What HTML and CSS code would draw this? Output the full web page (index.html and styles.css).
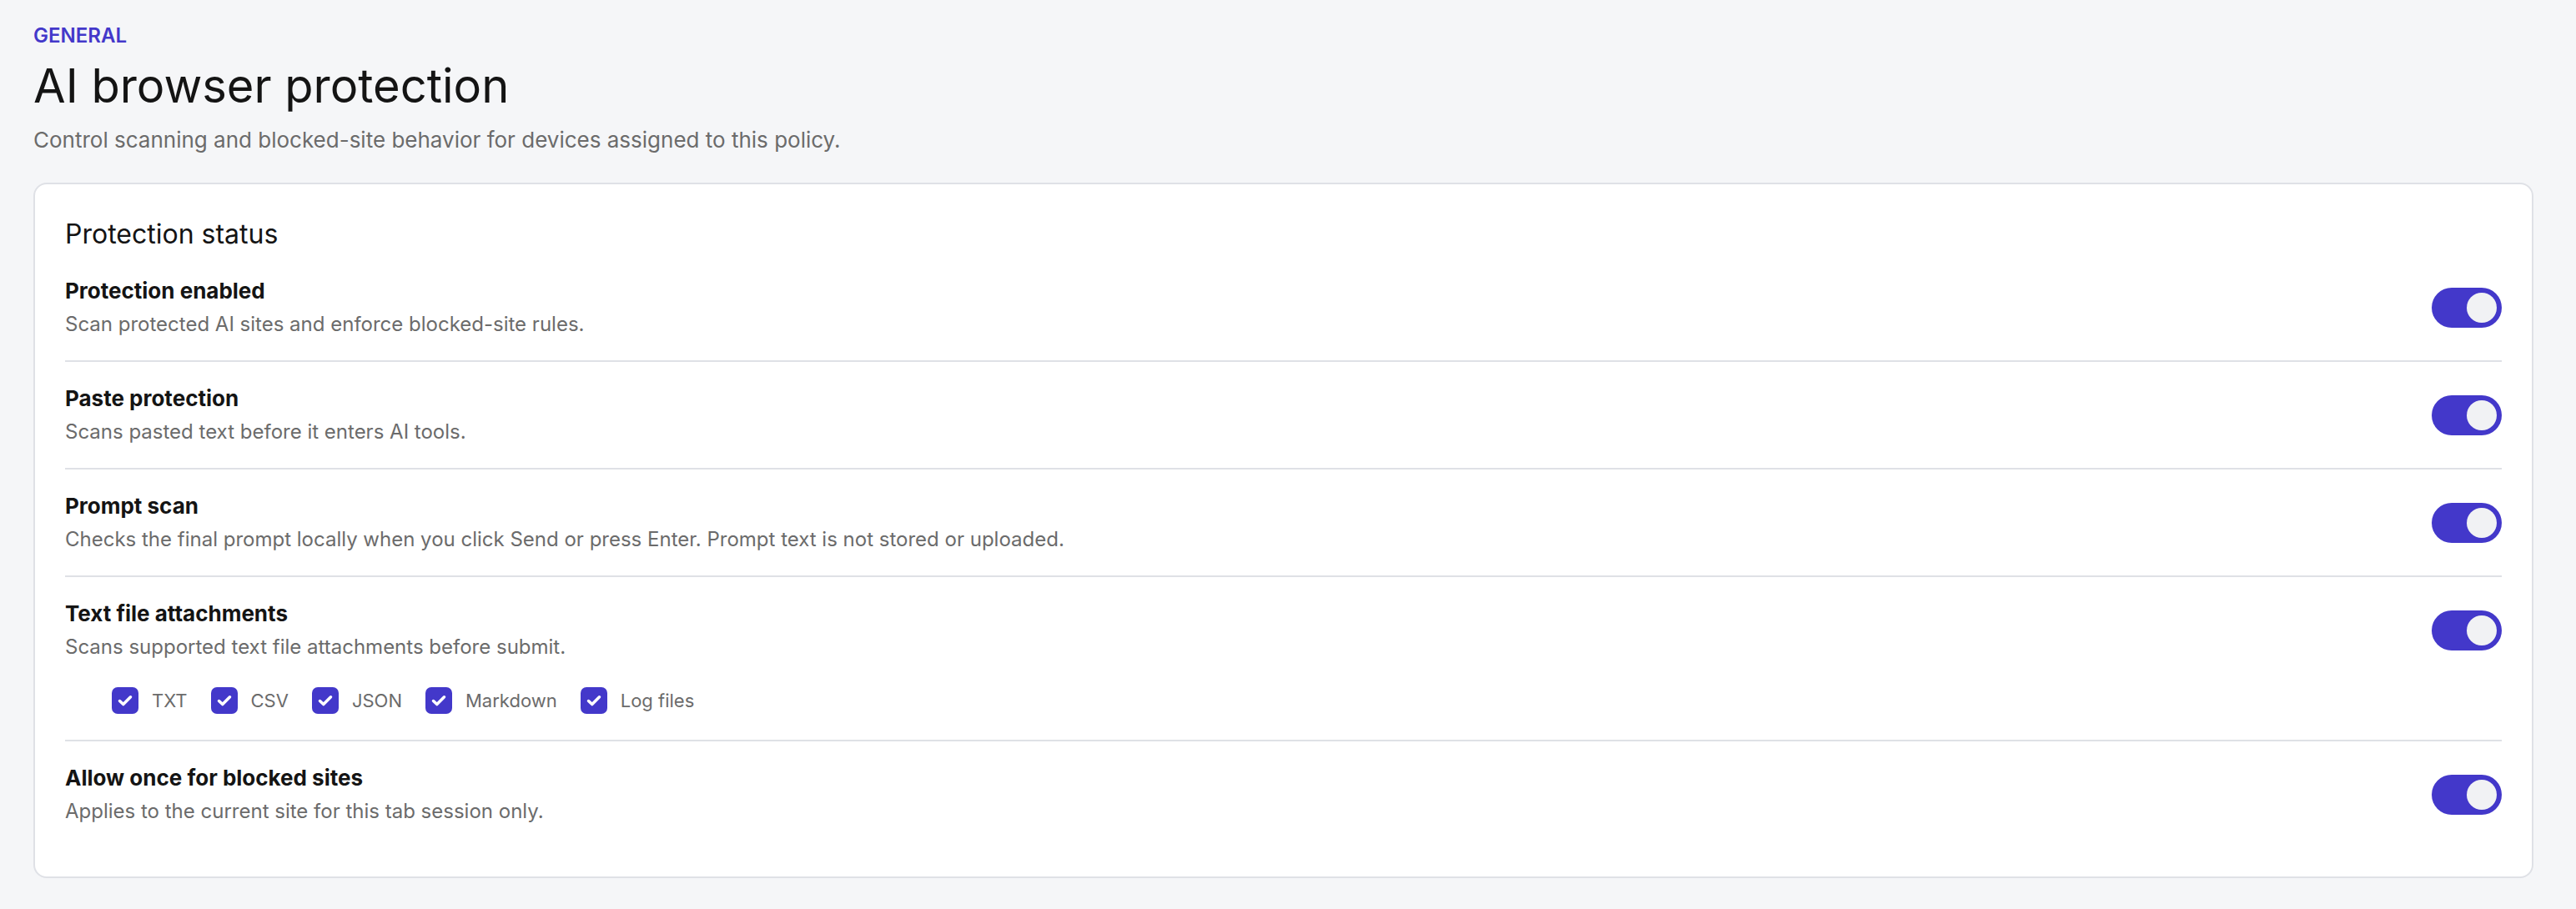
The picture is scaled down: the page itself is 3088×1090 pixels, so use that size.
FILE: index.html
```html
<!DOCTYPE html>
<html lang="en">
<head>
<meta charset="utf-8">
<title>AI browser protection</title>
<link rel="stylesheet" href="styles.css">
</head>
<body>
<main class="page">
  <header class="page-header">
    <div class="eyebrow">GENERAL</div>
    <h1 class="title">AI browser protection</h1>
    <p class="subtitle">Control scanning and blocked-site behavior for devices assigned to this policy.</p>
  </header>

  <section class="card">
    <h2 class="card-title">Protection status</h2>

    <div class="row">
      <div class="row-text">
        <div class="row-title">Protection enabled</div>
        <div class="row-desc">Scan protected AI sites and enforce blocked-site rules.</div>
      </div>
      <span class="toggle"><span class="knob"></span></span>
    </div>

    <div class="row">
      <div class="row-text">
        <div class="row-title">Paste protection</div>
        <div class="row-desc">Scans pasted text before it enters AI tools.</div>
      </div>
      <span class="toggle"><span class="knob"></span></span>
    </div>

    <div class="row">
      <div class="row-text">
        <div class="row-title">Prompt scan</div>
        <div class="row-desc">Checks the final prompt locally when you click Send or press Enter. Prompt text is not stored or uploaded.</div>
      </div>
      <span class="toggle"><span class="knob"></span></span>
    </div>

    <div class="row row-stack">
      <div class="row-main">
        <div class="row-text">
          <div class="row-title">Text file attachments</div>
          <div class="row-desc">Scans supported text file attachments before submit.</div>
        </div>
        <span class="toggle"><span class="knob"></span></span>
      </div>
      <div class="checks">
        <label class="check"><span class="box"><svg viewBox="0 0 32 32"><path d="M9.5 16.5 L13.8 20.6 L22.5 11.8"/></svg></span>TXT</label>
        <label class="check"><span class="box"><svg viewBox="0 0 32 32"><path d="M9.5 16.5 L13.8 20.6 L22.5 11.8"/></svg></span>CSV</label>
        <label class="check"><span class="box"><svg viewBox="0 0 32 32"><path d="M9.5 16.5 L13.8 20.6 L22.5 11.8"/></svg></span>JSON</label>
        <label class="check"><span class="box"><svg viewBox="0 0 32 32"><path d="M9.5 16.5 L13.8 20.6 L22.5 11.8"/></svg></span>Markdown</label>
        <label class="check"><span class="box"><svg viewBox="0 0 32 32"><path d="M9.5 16.5 L13.8 20.6 L22.5 11.8"/></svg></span>Log files</label>
      </div>
    </div>

    <div class="row">
      <div class="row-text">
        <div class="row-title">Allow once for blocked sites</div>
        <div class="row-desc">Applies to the current site for this tab session only.</div>
      </div>
      <span class="toggle"><span class="knob"></span></span>
    </div>
  </section>
</main>
</body>
</html>
```

FILE: styles.css
```css
* { box-sizing: border-box; }

html, body {
  margin: 0;
  padding: 0;
  background: #f5f6f8;
}

body {
  font-family: Inter, "Noto Sans", "Liberation Sans", sans-serif;
  color: #141414;
}

.page {
  padding: 27px 51px 0 40px;
}

.eyebrow {
  font-size: 24px;
  line-height: 32px;
  font-weight: 600;
  color: #4338ca;
}

.title {
  margin: 8px 0 0;
  font-size: 56px;
  line-height: 72px;
  font-weight: 400;
  color: #141414;
}

.subtitle {
  margin: 11px 0 0;
  font-size: 26px;
  line-height: 36px;
  color: #6b6b6b;
}

.card {
  margin-top: 33px;
  background: #fff;
  border: 2px solid #dfe1e6;
  border-radius: 16px;
  padding: 36px 36px 35px;
}

.card-title {
  margin: 0;
  font-size: 32px;
  line-height: 48px;
  font-weight: 400;
  color: #141414;
}

.row {
  display: flex;
  align-items: center;
  justify-content: space-between;
  padding: 24px 0 23px;
  border-top: 2px solid #dfe1e6;
}

.card-title + .row {
  border-top: none;
}

.row-stack {
  flex-direction: column;
  align-items: stretch;
  padding-bottom: 27px;
}

.row-main {
  display: flex;
  align-items: center;
  justify-content: space-between;
}

.row-title {
  font-size: 26px;
  line-height: 40px;
  font-weight: 700;
  color: #141414;
}

.row-desc {
  font-size: 24px;
  line-height: 40px;
  color: #6b6b6b;
}

.toggle {
  flex: none;
  display: flex;
  align-items: center;
  justify-content: flex-end;
  width: 84px;
  height: 48px;
  padding: 6px;
  border-radius: 24px;
  background: #4338ca;
}

.knob {
  width: 36px;
  height: 36px;
  border-radius: 50%;
  background: #f1f2f4;
}

.checks {
  display: flex;
  align-items: center;
  gap: 28px;
  margin-top: 24px;
  padding-left: 56px;
  height: 40px;
}

.check {
  display: flex;
  align-items: center;
  gap: 16px;
  font-size: 22px;
  line-height: 40px;
  color: #6b6b6b;
}

.box {
  width: 32px;
  height: 32px;
  border-radius: 7px;
  background: #4338ca;
  display: flex;
}

.box svg {
  width: 32px;
  height: 32px;
}

.box path {
  fill: none;
  stroke: #fff;
  stroke-width: 3.5;
  stroke-linecap: round;
  stroke-linejoin: round;
}
```
